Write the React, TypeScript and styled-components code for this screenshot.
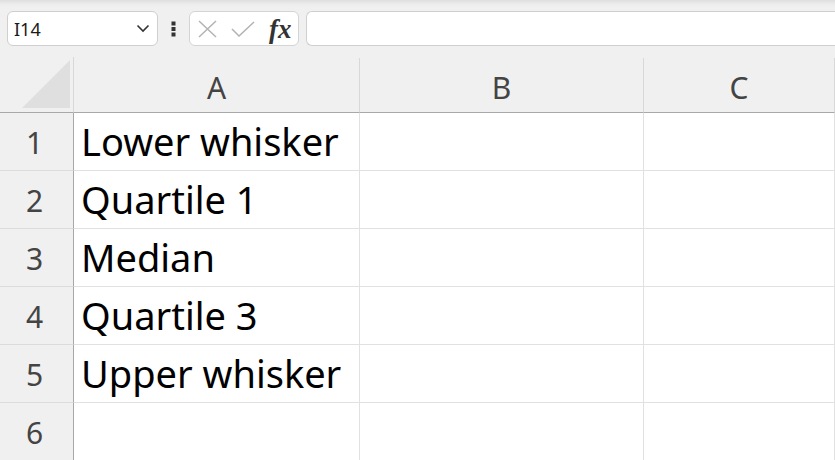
import React from "react";
import styled, { createGlobalStyle } from "styled-components";

const Global = createGlobalStyle`
  html, body { margin: 0; padding: 0; background: #f0f0f0; overflow: hidden; }
  body { font-family: "Noto Sans", "Open Sans", sans-serif; }
`;

const Page = styled.div`
  width: 835px;
  height: 460px;
  overflow: hidden;
  background: #f0f0f0;
  display: flex;
  flex-direction: column;
`;

const Toolbar = styled.div`
  height: 57px;
  flex: none;
  box-sizing: border-box;
  padding: 11px 0 0 7px;
  display: flex;
  align-items: flex-start;
  background: linear-gradient(#dedede 0px, #ececec 4px, #f0f0f0 7px);
`;

const NameBox = styled.div`
  width: 151px;
  height: 35px;
  box-sizing: border-box;
  border: 1px solid #cfcfcf;
  border-radius: 6px;
  background: #fff;
  display: flex;
  align-items: center;
  justify-content: space-between;
  padding: 0 7px 0 6px;
  font-family: "Noto Sans", sans-serif;
  font-size: 18px;
  color: #1a1a1a;
`;

const Dots = styled.div`
  width: 31px;
  height: 35px;
  display: flex;
  align-items: center;
  justify-content: center;
`;

const FormulaButtons = styled.div`
  width: 110px;
  height: 35px;
  box-sizing: border-box;
  border: 1px solid #d4d4d4;
  border-radius: 6px;
  background: #fff;
  display: flex;
  align-items: center;
  padding: 0 6px 0 8px;
  gap: 14px;
`;

const Fx = styled.span`
  font-family: "Liberation Serif", "DejaVu Serif", serif;
  font-style: italic;
  font-weight: bold;
  font-size: 27px;
  color: #333;
  line-height: 1;
  margin-top: 2px;
`;

const FormulaInput = styled.div`
  flex: 1;
  height: 35px;
  margin-left: 7px;
  box-sizing: border-box;
  border: 1px solid #cfcfcf;
  border-right: none;
  border-radius: 6px 0 0 6px;
  background: #fff;
`;

const Sheet = styled.div`
  display: grid;
  grid-template-columns: 74px 286px 284px 191px;
  grid-template-rows: 56px repeat(6, 58px);
`;

const Corner = styled.div`
  box-sizing: border-box;
  border-right: 1px solid #d8d8d8;
  border-bottom: 1px solid #a8a8a8;
  display: flex;
  align-items: flex-end;
  justify-content: flex-end;
  padding: 0 3px 4px 0;
`;

const ColHeader = styled.div`
  box-sizing: border-box;
  border-right: 1px solid #d8d8d8;
  border-bottom: 1px solid #a8a8a8;
  margin-top: 1px;
  text-align: center;
  font-family: "Noto Sans", sans-serif;
  font-size: 30px;
  line-height: 30px;
  color: #444;
  padding-top: 15px;
`;

const RowHeader = styled.div`
  box-sizing: border-box;
  border-right: 1px solid #a8a8a8;
  border-bottom: 1px solid #dcdcdc;
  text-align: center;
  padding-right: 4px;
  font-family: "Noto Sans", sans-serif;
  font-size: 30px;
  line-height: 30px;
  color: #444;
  padding-top: 15px;
`;

const Cell = styled.div`
  box-sizing: border-box;
  background: #fff;
  border-right: 1px solid #e1e1e1;
  border-bottom: 1px solid #e1e1e1;
  padding: 9px 0 0 7px;
  font-family: "Noto Sans", sans-serif;
  font-size: 38px;
  line-height: 38px;
  color: #000;
  white-space: nowrap;
`;

const data = ["Lower whisker", "Quartile 1", "Median", "Quartile 3", "Upper whisker", ""];

export default function App() {
  return (
    <Page>
      <Global />
      <Toolbar>
        <NameBox>
          <span>I14</span>
          <svg width="14" height="9" viewBox="0 0 14 9">
            <path d="M1.5 1.5 L7 7 L12.5 1.5" fill="none" stroke="#333" strokeWidth="1.6" />
          </svg>
        </NameBox>
        <Dots>
          <svg width="5" height="16" viewBox="0 0 5 16">
            <rect x="0.5" y="0.5" width="4" height="4" fill="#333" />
            <rect x="0.5" y="6" width="4" height="4" fill="#333" />
            <rect x="0.5" y="11.5" width="4" height="4" fill="#333" />
          </svg>
        </Dots>
        <FormulaButtons>
          <svg width="19" height="18" viewBox="0 0 19 18">
            <path d="M1 1 L18 17 M18 1 L1 17" stroke="#b3b3b3" strokeWidth="1.5" fill="none" />
          </svg>
          <svg width="24" height="16" viewBox="0 0 24 16">
            <path d="M1 8 L8 15 L23 1" stroke="#b3b3b3" strokeWidth="1.5" fill="none" />
          </svg>
          <Fx>fx</Fx>
        </FormulaButtons>
        <FormulaInput />
      </Toolbar>
      <Sheet>
        <Corner>
          <svg width="48" height="48" viewBox="0 0 48 48">
            <polygon points="48,0 48,48 0,48" fill="#dfdfdf" />
          </svg>
        </Corner>
        <ColHeader>A</ColHeader>
        <ColHeader>B</ColHeader>
        <ColHeader>C</ColHeader>
        {data.map((t, i) => (
          <React.Fragment key={i}>
            <RowHeader>{i + 1}</RowHeader>
            <Cell>{t}</Cell>
            <Cell />
            <Cell />
          </React.Fragment>
        ))}
      </Sheet>
    </Page>
  );
}
